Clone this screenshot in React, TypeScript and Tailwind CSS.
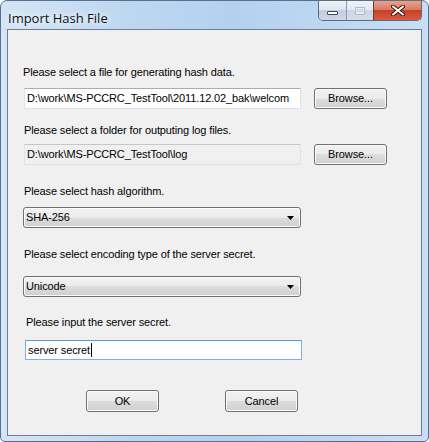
import React from "react";

const btnFace =
  "border border-[#707070] rounded-[3px] shadow-[inset_0_0_0_1px_#fcfcfc] bg-[linear-gradient(#f2f2f2_0%,#ebebeb_50%,#dddddd_50%,#cfcfcf_100%)]";

const Button = ({ label, className = "" }: { label: string; className?: string }) => (
  <div className={`${btnFace} flex items-center justify-center text-black ${className}`}>
    {label}
  </div>
);

const Combo = ({ value, className = "" }: { value: string; className?: string }) => (
  <div className={`${btnFace} flex items-center justify-between pl-[2px] pr-[6px] ${className}`}>
    <span>{value}</span>
    <svg width="7" height="4" viewBox="0 0 7 4">
      <path d="M0 0h7L3.5 4z" fill="#000" />
    </svg>
  </div>
);

const Label = ({ text, className = "" }: { text: string; className?: string }) => (
  <div className={`h-[13px] leading-[13px] text-black ${className}`}>{text}</div>
);

const CaptionButtons = () => (
  <div className="absolute top-0 right-[6px] flex h-[20px] rounded-b-[5px] border border-t-0 border-[#5a6b82] overflow-hidden">
    {/* minimize */}
    <div className="w-[28px] h-full flex items-end justify-center pb-[5px] border-r border-[#8a9ab0] bg-[linear-gradient(#eef2f8_0%,#dfe6f0_45%,#c3cfdf_50%,#cbd7e6_100%)]">
      <div className="w-[11px] h-[4px] bg-white border border-[#3c4a5e] rounded-[1px]" />
    </div>
    {/* maximize (disabled) */}
    <div className="w-[27px] h-full flex items-center justify-center border-r border-[#6e3a34] bg-[linear-gradient(#eef2f8_0%,#e4eaf2_45%,#ccd7e5_50%,#d3ddea_100%)]">
      <div className="w-[10px] h-[8px] border border-[#b2bccb] bg-[#e8edf4] flex items-center justify-center">
        <div className="w-[6px] h-[3px] border border-[#c3ccd8]" />
      </div>
    </div>
    {/* close */}
    <div className="w-[47px] h-full flex items-center justify-center bg-[linear-gradient(#eba08c_0%,#dc7a63_45%,#c7402a_50%,#d85a40_100%)]">
      <svg width="14" height="11" viewBox="0 0 14 11">
        <path d="M2 1.5L12 9.5M12 1.5L2 9.5" stroke="#3b1a14" strokeWidth="4" strokeLinecap="round" />
        <path d="M2 1.5L12 9.5M12 1.5L2 9.5" stroke="#ffffff" strokeWidth="2" strokeLinecap="round" />
      </svg>
    </div>
  </div>
);

export default function App() {
  return (
    <div className="w-[429px] h-[442px] bg-white">
      <div className="relative w-full h-full flex flex-col border border-[#5d6f87] rounded-t-[7px] rounded-b-[5px] overflow-hidden bg-[linear-gradient(90deg,#d3e5f6_0%,#bcd7f1_30%,#b3d1ef_55%,#c9def4_100%)]">
        {/* Title bar */}
        <div className="h-[28px] pl-[7px] pt-[4px] shrink-0">
          <span
            className="text-[13px] leading-[17px] text-[#111] [text-shadow:0_0_6px_#ffffff,0_0_10px_#ffffff]"
            style={{ fontFamily: '"Open Sans", "Noto Sans", sans-serif' }}
          >
            Import Hash File
          </span>
        </div>
        <CaptionButtons />

        {/* Client area */}
        <div
          className="flex-1 mx-[6px] mb-[5px] border border-[#6f7d90] bg-[#f0f0f0] flex flex-col text-[11px] tracking-[-0.12px]"
          style={{ fontFamily: '"Liberation Sans", Arial, sans-serif' }}
        >
          <Label text="Please select a file for generating hash data." className="mt-[36px] ml-[15px]" />
          <div className="flex mt-[9px] ml-[16px] h-[21px]">
            <div className="w-[277px] h-full border border-[#dfe2e8] border-t-[#abadb3] bg-white pl-[2px] flex items-center overflow-hidden whitespace-nowrap text-black">
              D:\work\MS-PCCRC_TestTool\2011.12.02_bak\welcom
            </div>
            <Button label="Browse..." className="ml-[13px] w-[73px] h-full" />
          </div>

          <Label text="Please select a folder for outputing log files." className="mt-[15px] ml-[16px]" />
          <div className="flex mt-[7px] ml-[16px] h-[21px]">
            <div className="w-[277px] h-full border border-[#dfe2e8] border-t-[#c5c7cc] bg-[#f0f0f0] pl-[2px] flex items-center overflow-hidden whitespace-nowrap text-black">
              D:\work\MS-PCCRC_TestTool\log
            </div>
            <Button label="Browse..." className="ml-[13px] w-[73px] h-full" />
          </div>

          <Label text="Please select hash algorithm." className="mt-[20px] ml-[16px]" />
          <Combo value="SHA-256" className="mt-[9px] ml-[15px] w-[278px] h-[21px]" />

          <Label text="Please select encoding type of the server secret." className="mt-[20px] ml-[16px]" />
          <Combo value="Unicode" className="mt-[15px] ml-[15px] w-[278px] h-[21px]" />

          <Label text="Please input the server secret." className="mt-[19px] ml-[18px]" />
          <div className="mt-[11px] ml-[17px] w-[277px] h-[20px] border border-[#7fb0e4] border-t-[#5d9ad8] bg-white pl-[2px] flex items-center text-black">
            <span>server secret</span>
            <span className="inline-block w-[1px] h-[14px] bg-black ml-[1px]" />
          </div>

          <div className="flex mt-[30px] ml-[78px] h-[22px]">
            <Button label="OK" className="w-[73px] h-full" />
            <Button label="Cancel" className="ml-[66px] w-[73px] h-full" />
          </div>
        </div>
      </div>
    </div>
  );
}
